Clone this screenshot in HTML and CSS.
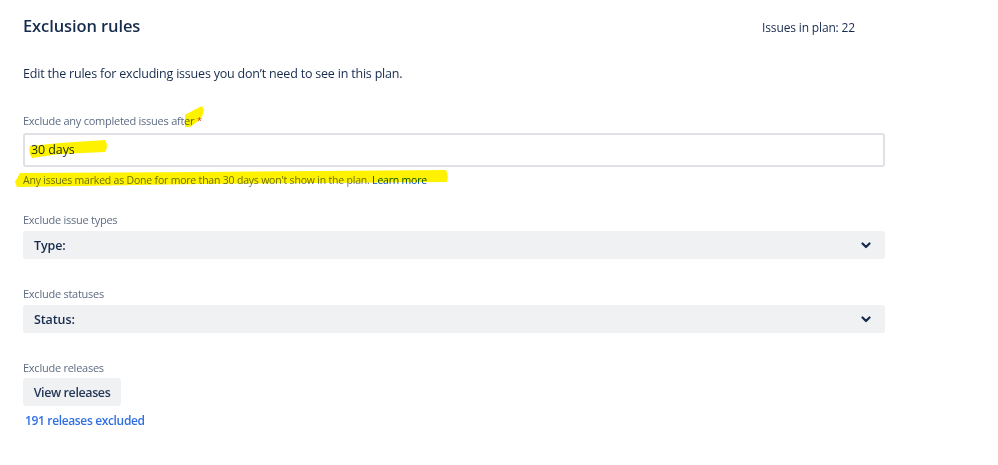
FILE: index.html
```html
<!DOCTYPE html>
<html lang="en">
<head>
<meta charset="utf-8">
<title>Exclusion rules</title>
<link rel="stylesheet" href="styles.css">
</head>
<body>
<div class="page">
  <div class="header">
    <h1 class="title">Exclusion rules</h1>
    <span class="count">Issues in plan: 22</span>
  </div>
  <p class="desc">Edit the rules for excluding issues you don’t need to see in this plan.</p>

  <div class="field f1">
    <label class="label">Exclude any completed issues after <span class="req">*</span></label>
    <div class="input">30 days</div>
    <div class="help">Any issues marked as Done for more than 30 days won't show in the plan. <a class="help-link">Learn more</a></div>
  </div>

  <div class="field f2">
    <label class="label">Exclude issue types</label>
    <div class="select"><span class="select-text">Type:</span>
      <svg class="chev" width="10" height="7" viewBox="0 0 10 7"><path d="M1.5 1.5 L5 5 L8.5 1.5" fill="none" stroke="#172b4d" stroke-width="2.2" stroke-linecap="round" stroke-linejoin="round"/></svg>
    </div>
  </div>

  <div class="field f3">
    <label class="label">Exclude statuses</label>
    <div class="select"><span class="select-text">Status:</span>
      <svg class="chev" width="10" height="7" viewBox="0 0 10 7"><path d="M1.5 1.5 L5 5 L8.5 1.5" fill="none" stroke="#172b4d" stroke-width="2.2" stroke-linecap="round" stroke-linejoin="round"/></svg>
    </div>
  </div>

  <div class="field f4">
    <label class="label">Exclude releases</label>
    <button class="btn">View releases</button>
    <a class="link">191 releases excluded</a>
  </div>
</div>

<svg class="marks" width="998" height="465" viewBox="0 0 998 465">
  <path d="M185,115 L194,110 L202,106 L204,110 L202,117 L197,122 L190,127 L185,127 Z" />
  <path d="M30,146 L60,143 L105,140 Q109,146 105,152 L60,154 L32,158 Q28,152 30,146 Z" />
  <path d="M20,173 L200,172 L446,170 Q449,176 447,182 L200,184 L17,187 L15,182 Z" />
</svg>
</body>
</html>
```

FILE: styles.css
```css
* { box-sizing: border-box; }
html, body { margin: 0; padding: 0; background: #fff; }
body {
  font-family: "Open Sans", "Noto Sans", "Liberation Sans", sans-serif;
  color: #172b4d;
  position: relative;
  width: 998px;
  height: 465px;
  overflow: hidden;
}
.page {
  padding: 13px 0 0 23px;
  width: 885px;
}
.header {
  display: flex;
  justify-content: space-between;
  align-items: baseline;
  height: 26px;
  padding-right: 30px;
}
.title {
  margin: 0;
  font-size: 16.5px;
  font-weight: 600;
  line-height: 26px;
  color: #172b4d;
  letter-spacing: -0.1px;
}
.count {
  font-size: 12px;
  letter-spacing: -0.15px;
  color: #172b4d;
}
.desc {
  margin: 25px 0 0 0;
  font-size: 12.5px;
  letter-spacing: -0.2px;
  line-height: 20px;
  color: #172b4d;
}
.field { display: flex; flex-direction: column; align-items: flex-start; }
.f1 { margin-top: 29px; }
.f2 { margin-top: 24px; }
.f3, .f4 { margin-top: 27px; }
.label {
  font-size: 11px;
  letter-spacing: -0.25px;
  line-height: 16px;
  color: #5e6c84;
}
.req { color: #de350b; font-size: 9px; vertical-align: top; }
.input {
  margin-top: 4px;
  width: 862px;
  height: 34px;
  border: 2px solid #dfe1e6;
  border-radius: 3px;
  padding: 0 6px;
  font-size: 12.5px;
  letter-spacing: -0.1px;
  line-height: 30px;
  color: #172b4d;
}
.help {
  margin-top: 5px;
  font-size: 10.5px;
  letter-spacing: -0.2px;
  line-height: 16px;
  color: #6b778c;
}
.help-link { color: #0052cc; text-decoration: none; }
.select {
  margin-top: 3px;
  width: 862px;
  height: 28px;
  background: #f0f1f3;
  border-radius: 3px;
  display: flex;
  align-items: center;
  justify-content: space-between;
  padding: 0 14px 0 11px;
}
.select-text {
  font-size: 12.5px;
  letter-spacing: -0.1px;
  font-weight: 600;
  color: #172b4d;
}
.chev { display: block; }
.btn {
  margin-top: 2px;
  height: 28px;
  width: 98px;
  padding: 0;
  border: none;
  border-radius: 3px;
  background: #f0f1f3;
  font-family: inherit;
  font-size: 12.5px;
  letter-spacing: -0.4px;
  font-weight: 600;
  color: #253858;
}
.link {
  margin: 7px 0 0 2px;
  font-size: 12px;
  letter-spacing: -0.35px;
  line-height: 16px;
  font-weight: 600;
  color: #2f6fe4;
  text-decoration: none;
}
.marks {
  position: absolute;
  left: 0;
  top: 0;
  pointer-events: none;
  mix-blend-mode: multiply;
  fill: #fff200;
}
```
